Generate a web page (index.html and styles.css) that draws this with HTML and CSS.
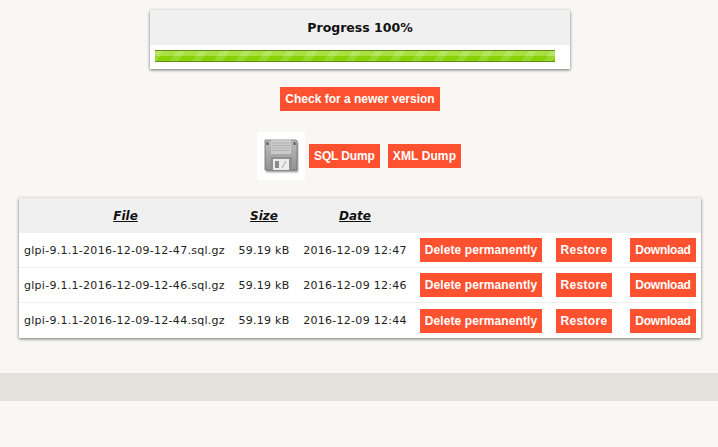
FILE: index.html
```html
<!DOCTYPE html>
<html lang="en">
<head>
  <meta charset="UTF-8" />
  <title>Dumps</title>
  <link rel="stylesheet" href="styles.css">
</head>
<body>
  <div class="content">
    <div class="progress-box">
      <div class="progress-title">Progress 100%</div>
      <div class="progress-body">
        <div class="progress-bar"></div>
      </div>
    </div>

    <div class="check-row">
      <a class="btn" href="#">Check for a newer version</a>
    </div>

    <div class="dump-row">
      <div class="dump-icon">
        <svg width="36" height="36" viewBox="0 0 36 36">
          <defs>
            <linearGradient id="disk" x1="0" y1="0" x2="0" y2="1">
              <stop offset="0" stop-color="#bcbcbc" />
              <stop offset="1" stop-color="#929292" />
            </linearGradient>
            <filter id="soft" x="-20%" y="-20%" width="140%" height="140%">
              <feGaussianBlur stdDeviation="0.9" />
            </filter>
            <filter id="softer" x="-5%" y="-5%" width="110%" height="110%">
              <feGaussianBlur stdDeviation="0.35" />
            </filter>
          </defs>
          <rect x="3" y="4" width="32" height="30" fill="#333" opacity="0.55" filter="url(#soft)" />
          <g filter="url(#softer)">
            <path d="M2 2 H33 L34 3 V32 H2 Z" fill="url(#disk)" stroke="#727272" stroke-width="0.8" />
            <rect x="8" y="2" width="20" height="14" fill="#cacaca" />
            <path d="M9 5 H27 M9 7.5 H27 M9 10 H27 M9 12.5 H27" stroke="#b4b4b4" stroke-width="1" />
            <rect x="3.5" y="4" width="2" height="3" fill="#5a5a5a" />
            <rect x="30.5" y="4" width="2" height="3" fill="#5a5a5a" />
            <rect x="8" y="19" width="21" height="13" fill="#8f8f8f" />
            <rect x="10" y="21" width="16" height="11" fill="#ececec" />
            <rect x="12" y="23" width="4" height="7" fill="#8a8a8a" />
            <path d="M19 30 L23 23" stroke="#a5a5a5" stroke-width="1" />
          </g>
        </svg>
      </div>
      <a class="btn btn-sql" href="#">SQL Dump</a>
      <a class="btn btn-xml" href="#">XML Dump</a>
    </div>

    <table class="dump-table">
      <colgroup>
        <col class="col-file"><col class="col-size"><col class="col-date">
        <col class="col-delete"><col class="col-restore"><col class="col-download">
      </colgroup>
      <thead>
        <tr>
          <th><a href="#">File</a></th>
          <th><a href="#">Size</a></th>
          <th><a href="#">Date</a></th>
          <th colspan="3"></th>
        </tr>
      </thead>
      <tbody>
        <tr>
          <td class="name">glpi-9.1.1-2016-12-09-12-47.sql.gz</td>
          <td>59.19 kB</td>
          <td>2016-12-09 12:47</td>
          <td><a class="btn btn-delete" href="#">Delete permanently</a></td>
          <td><a class="btn btn-restore" href="#">Restore</a></td>
          <td class="last"><a class="btn btn-download" href="#">Download</a></td>
        </tr>
        <tr>
          <td class="name">glpi-9.1.1-2016-12-09-12-46.sql.gz</td>
          <td>59.19 kB</td>
          <td>2016-12-09 12:46</td>
          <td><a class="btn btn-delete" href="#">Delete permanently</a></td>
          <td><a class="btn btn-restore" href="#">Restore</a></td>
          <td class="last"><a class="btn btn-download" href="#">Download</a></td>
        </tr>
        <tr>
          <td class="name">glpi-9.1.1-2016-12-09-12-44.sql.gz</td>
          <td>59.19 kB</td>
          <td>2016-12-09 12:44</td>
          <td><a class="btn btn-delete" href="#">Delete permanently</a></td>
          <td><a class="btn btn-restore" href="#">Restore</a></td>
          <td class="last"><a class="btn btn-download" href="#">Download</a></td>
        </tr>
      </tbody>
    </table>
  </div>

  <div class="footer"></div>
</body>
</html>
```

FILE: styles.css
```css
html, body {
  height: 100%;
}

body {
  margin: 0;
  background-color: #f8f7f3;
  font-family: "DejaVu Sans", Verdana, sans-serif;
  font-size: 11px;
  color: #222;
  overflow: hidden;
}

.content {
  padding: 10px 0 0 2px;
}

.btn {
  display: inline-block;
  height: 24px;
  line-height: 24px;
  padding: 0 5px;
  box-sizing: border-box;
  vertical-align: top;
  background-color: #fe5130;
  color: #fff;
  font-family: "Liberation Sans", Arial, sans-serif;
  font-size: 12px;
  font-weight: bold;
  text-decoration: none;
  white-space: nowrap;
}

.btn-sql { letter-spacing: -0.12px; }
.btn-xml { letter-spacing: 0.1px; }
.btn-delete { letter-spacing: 0.11px; }
.btn-restore { letter-spacing: 0.3px; }
.btn-download { letter-spacing: -0.25px; }

/* progress */
.progress-box {
  width: 420px;
  margin: 0 auto;
  background: #fff;
  box-shadow: 0 1px 3px rgba(0,0,0,0.55);
}

.progress-title {
  height: 35px;
  line-height: 35px;
  background-color: #f0f0f0;
  text-align: center;
  font-size: 12.5px;
  font-weight: bold;
  color: #111;
}

.progress-body {
  padding: 5px 15px 7px 5px;
}

.progress-bar {
  height: 12px;
  box-sizing: border-box;
  border-top: 1px solid #5f8a1e;
  border-bottom: 1px solid #5f8a1e;
  background:
    repeating-linear-gradient(125deg, rgba(255,255,255,0.16) 0 7px, rgba(255,255,255,0) 7px 18px),
    linear-gradient(#a8e040 0, #a8e040 50%, #86d204 50%, #86d204 100%);
}

/* buttons above the table */
.check-row {
  margin-top: 18px;
  display: flex;
  justify-content: center;
}

.dump-row {
  margin-top: 21px;
  margin-left: 255px;
  display: flex;
  align-items: center;
  gap: 8px;
}

.dump-icon {
  width: 48px;
  height: 48px;
  margin-right: -4px;
  background: #fff;
  display: flex;
  align-items: center;
  justify-content: center;
}

/* table */
.dump-table {
  width: 682px;
  margin: 18px 0 0 17px;
  border-collapse: separate;
  border-spacing: 0;
  table-layout: fixed;
  background: #fff;
  box-shadow: 0 1px 3px rgba(0,0,0,0.55);
}

.col-file { width: 213px; }
.col-size { width: 64px; }
.col-date { width: 118px; }
.col-delete { width: 134px; }
.col-restore { width: 72px; }
.col-download { width: 81px; }

.dump-table th {
  height: 35px;
  padding: 0;
  background-color: #f0f0f0;
  font-size: 12px;
  font-style: italic;
  font-weight: bold;
  text-align: center;
}

.dump-table th a {
  color: #111;
}

.dump-table td {
  height: 35px;
  padding: 0;
  box-sizing: border-box;
  border-bottom: 1px solid #eeeeee;
  text-align: center;
  white-space: nowrap;
  letter-spacing: 0.28px;
}

.dump-table tr:last-child td {
  border-bottom: none;
}

.dump-table td.name {
  text-align: left;
  padding-left: 5px;
}

.dump-table td.last {
  padding-left: 5px;
}

/* footer band */
.footer {
  height: 28px;
  margin-top: 35px;
  background-color: #e2e1dc;
}
```
